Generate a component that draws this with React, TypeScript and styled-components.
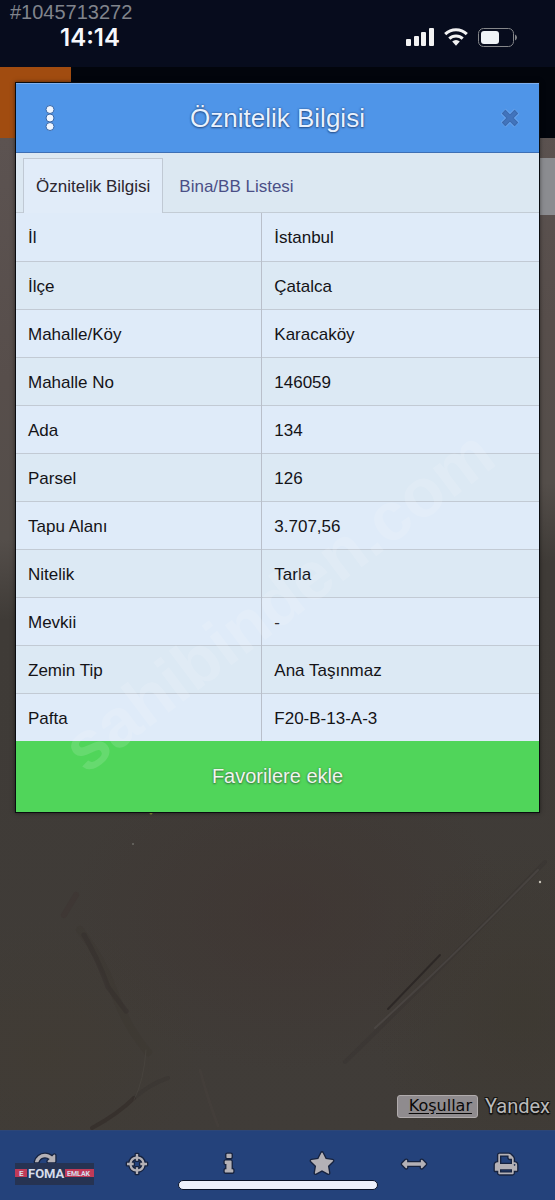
import React from "react";
import styled, { createGlobalStyle } from "styled-components";

const GlobalStyle = createGlobalStyle`
  *, *::before, *::after { box-sizing: border-box; }
  body {
    margin: 0;
    background: #3f3b36;
    font-family: "Liberation Sans", Arial, sans-serif;
  }
  button { font-family: inherit; border: 0; padding: 0; background: none; cursor: pointer; }
`;

/* ---------- Page frame ---------- */

const Screen = styled.div`
  position: relative;
  display: grid;
  grid-template-columns: minmax(0, 1fr);
  min-height: 100vh;
  overflow: hidden;
`;

const Backdrop = styled.div`
  grid-area: 1 / 1;
  display: flex;
  flex-direction: column;
`;

const DialogLayer = styled.div`
  grid-area: 1 / 1;
  align-self: start;
  z-index: 1;
  padding: 83px 16px 120px;
  pointer-events: none;
`;

/* ---------- Status bar ---------- */

const StatusBar = styled.header`
  display: flex;
  align-items: flex-start;
  justify-content: space-between;
  height: 67px;
  padding: 24px 38px 0 60px;
  background: #070c1d;
`;

const Clock = styled.time`
  color: #f6f8fc;
  font: 600 24px/28px Inter, "Liberation Sans", sans-serif;
`;

const StatusIcons = styled.div`
  display: flex;
  align-items: center;
  gap: 10px;
  height: 26px;
`;

const ListingNumber = styled.span`
  position: absolute;
  top: 0;
  left: 10px;
  color: #80848c;
  font-size: 20px;
  line-height: 24px;
`;

const AppBar = styled.div`
  display: flex;
  height: 71px;
  background: #02050c;
`;

const BrandTile = styled.div`
  width: 71px;
  background: #a14c10;
`;

/* ---------- Map ---------- */

const Map = styled.main`
  position: relative;
  flex: 1;
  display: flex;
  flex-direction: column;
  justify-content: space-between;
  align-items: flex-end;
  padding: 20px 0 12px;
  background:
    radial-gradient(ellipse 220px 160px at 52% 78%, rgba(64, 50, 47, 0.45), transparent),
    radial-gradient(ellipse 160px 130px at 8% 92%, rgba(66, 60, 50, 0.5), transparent),
    radial-gradient(ellipse 150px 170px at 94% 88%, rgba(60, 55, 45, 0.5), transparent),
    linear-gradient(174deg, #5c5351 0, #574e4b 240px, #544e4a 400px, #3f3b37 480px, #403c38 100%);
`;

const Terrain = styled.svg`
  position: absolute;
  left: 0;
  bottom: 0;
  width: 100%;
  height: 318px;
`;

const MapControl = styled.div`
  width: 15px;
  height: 57px;
  background: #8b8c90;
`;

const Attribution = styled.footer`
  position: relative;
  display: flex;
  align-items: center;
  gap: 7px;
  padding-right: 5px;
`;

const Terms = styled.a`
  display: block;
  width: 81px;
  height: 23px;
  padding-right: 5px;
  border: 1px solid #b0abac;
  border-radius: 3px;
  background: #8f8b8e;
  color: #0a0909;
  font-family: "DejaVu Sans", Verdana, sans-serif;
  font-size: 16px;
  line-height: 20px;
  text-align: right;
  text-underline-offset: 2px;
`;

const Provider = styled.span`
  color: #b9b9ba;
  font: 400 20px/24px Roboto, "Liberation Sans", sans-serif;
  text-shadow: 1px 1px 0 #161513, -1px -1px 0 #161513, 1px -1px 0 #161513, -1px 1px 0 #161513,
    0 2px 1px #161513;
`;

/* ---------- Bottom navigation ---------- */

const BottomNav = styled.nav`
  position: relative;
  display: grid;
  grid-template-columns: repeat(6, 1fr);
  height: 70px;
  padding-right: 2px;
  background: #24427b;
  border-top: 1px solid #2d4677;
`;

const NavButton = styled.button`
  display: flex;
  justify-content: center;
  align-items: flex-start;
  padding: 21px 2px 0 0;
  color: #b4b1b6;
`;

const NavIcon = styled.svg`
  width: 24px;
  height: 24px;
  overflow: visible;
  fill: currentColor;
  stroke: #17233f;
  stroke-width: 200px;
  stroke-linejoin: round;
  paint-order: stroke;
`;

const HomeIndicator = styled.div`
  position: absolute;
  left: 50%;
  bottom: 10px;
  width: 200px;
  height: 10px;
  transform: translateX(-50%);
  border: 1px solid #0c1428;
  border-radius: 5px;
  background: #eef1fb;
`;

const Sticker = styled.div`
  position: absolute;
  left: 15px;
  bottom: 15px;
  display: flex;
  align-items: center;
  width: 79px;
  height: 22px;
  background: linear-gradient(#263352 6px, #c03a58 6px, #c03a58 14px, #263352 14px);
  color: #d5dcea;
  font-family: Roboto, "Liberation Sans", sans-serif;
  font-weight: 700;
`;

const StickerMark = styled.span`
  width: 12px;
  padding-left: 4px;
  font-size: 8px;
  line-height: 20px;
`;

const StickerName = styled.span`
  width: 38px;
  padding-left: 1px;
  background: #263352;
  font-size: 13px;
  line-height: 20px;
`;

const StickerKind = styled.span`
  padding-left: 2px;
  font-size: 7px;
  line-height: 20px;
`;

/* ---------- Dialog ---------- */

const Dialog = styled.section`
  pointer-events: auto;
  background: #e0ebf9;
  box-shadow: 0 0 0 1px #0a0c10, 0 0 4px 1px rgba(0, 0, 0, 0.5);
`;

const DialogHeader = styled.header`
  display: grid;
  grid-template-columns: 68px 1fr 68px;
  height: 70px;
  border-top: 1px solid #7fb0ee;
  border-bottom: 1px solid #3d6fb5;
  background: #4f95e8;
`;

const DialogTitle = styled.h1`
  margin: 0;
  color: #e9f2ff;
  font-size: 26px;
  font-weight: 400;
  line-height: 68px;
  text-align: center;
  white-space: nowrap;
  text-shadow: 0 0 2px #23497f, 0 1px 2px #2a5390;
`;

const HeaderButton = styled.button<{ $end?: boolean }>`
  display: flex;
  align-items: center;
  justify-content: ${(p) => (p.$end ? "flex-end" : "center")};
  padding-right: ${(p) => (p.$end ? "18px" : "0")};
`;

const Tabs = styled.div`
  display: flex;
  align-items: flex-end;
  height: 60px;
  padding: 0 7px;
  border-bottom: 1px solid #c3ccd5;
  background: #dce8f2;
`;

const Tab = styled.button<{ $active?: boolean }>`
  height: 55px;
  margin-bottom: -1px;
  padding: 2px 12px 0;
  border: 1px solid ${(p) => (p.$active ? "#c0c9d4" : "transparent")};
  border-bottom: 0;
  background: ${(p) => (p.$active ? "#e1ecf9" : "transparent")};
  color: ${(p) => (p.$active ? "#2b2630" : "#4b4f86")};
  font-size: 17px;
  line-height: 52px;
  white-space: nowrap;

  & + & { margin-left: 3px; }
`;

const Attributes = styled.table`
  width: 100%;
  border-collapse: collapse;
  table-layout: fixed;
  color: #141317;
  font-size: 17px;
  line-height: 24px;
`;

const Row = styled.tr`
  height: 48px;
  background: #dfebf9;

  &:nth-child(even) { background: #dce9f4; }
  & + & { border-top: 1px solid #c2cad4; }
`;

const Label = styled.th`
  width: 47%;
  padding: 3px 12px 0;
  border-right: 1px solid #b9bfca;
  font-weight: 400;
  text-align: left;
`;

const Value = styled.td`
  padding: 3px 12px 0;
`;

const FavoriteButton = styled.button`
  display: block;
  width: 100%;
  height: 71px;
  background: #50d55a;
  color: #f0f5ee;
  font-size: 20px;
  text-shadow: 0 1px 2px #35763c, 0 0 2px #4b8a52;
`;

const Watermark = styled.div`
  position: absolute;
  z-index: 2;
  top: 600px;
  left: 50%;
  color: rgba(255, 255, 255, 0.13);
  font: 700 68px/1 "Liberation Sans", Arial, sans-serif;
  white-space: nowrap;
  transform: translate(-50%, -50%) rotate(-37deg);
  pointer-events: none;
`;

/* ---------- Data ---------- */

const attributes: [string, string][] = [
  ["İl", "İstanbul"],
  ["İlçe", "Çatalca"],
  ["Mahalle/Köy", "Karacaköy"],
  ["Mahalle No", "146059"],
  ["Ada", "134"],
  ["Parsel", "126"],
  ["Tapu Alanı", "3.707,56"],
  ["Nitelik", "Tarla"],
  ["Mevkii", "-"],
  ["Zemin Tip", "Ana Taşınmaz"],
  ["Pafta", "F20-B-13-A-3"],
];

const navItems = [
  {
    label: "Yenile",
    path: "M1639 1056q0 5-1 7-64 268-268 434.5t-478 166.5q-146 0-282.5-55t-243.5-157l-129 129q-19 19-45 19t-45-19-19-45v-448q0-26 19-45t45-19h448q26 0 45 19t19 45-19 45l-137 137q71 66 161 102t187 36q134 0 250-65t186-179q11-17 53-117 8-23 30-23h192q13 0 22.5 9.5t9.5 22.5zm25-800v448q0 26-19 45t-45 19h-448q-26 0-45-19t-19-45 19-45l138-138q-148-137-349-137-134 0-250 65t-186 179q-11 17-53 117-8 23-30 23h-199q-13 0-22.5-9.5t-9.5-22.5v-7q65-268 270-434.5t480-166.5q146 0 284 55.5t245 156.5l130-129q19-19 45-19t45 19 19 45z",
  },
  {
    label: "Konum",
    path: "M810 150h172v180a575 575 0 0 1 480 480h180v172h-180a575 575 0 0 1-480 480v180h-172v-180a575 575 0 0 1-480-480h-180v-172h180a575 575 0 0 1 480-480zM810 500a410 410 0 0 0-310 310h150v172h-150a410 410 0 0 0 310 310v-150h172v150a410 410 0 0 0 310-310h-150v-172h150a410 410 0 0 0-310-310v150h-172z",
  },
  {
    label: "Bilgi",
    path: "M1216 1344v128q0 26-19 45t-45 19h-512q-26 0-45-19t-19-45v-128q0-26 19-45t45-19h64v-384h-64q-26 0-45-19t-19-45v-128q0-26 19-45t45-19h384q26 0 45 19t19 45v576h64q26 0 45 19t19 45zm-128-1152v192q0 26-19 45t-45 19h-256q-26 0-45-19t-19-45v-192q0-26 19-45t45-19h256q26 0 45 19t19 45z",
  },
  {
    label: "Favoriler",
    path: "M1728 647q0 22-26 48l-363 354 86 500q1 7 1 20 0 21-10.5 35.5t-30.5 14.5q-19 0-40-12l-449-236-449 236q-22 12-40 12-21 0-31.5-14.5t-10.5-35.5q0-6 2-20l86-500-364-354q-25-27-25-48 0-37 56-46l502-73 225-455q19-41 49-41t49 41l225 455 502 73q56 9 56 46z",
  },
  {
    label: "Ölçüm",
    path: "M1792 896q0 26-19 45l-256 256q-19 19-45 19t-45-19-19-45v-128h-1024v128q0 26-19 45t-45 19-45-19l-256-256q-19-19-19-45t19-45l256-256q19-19 45-19t45 19 19 45v128h1024v-128q0-26 19-45t45-19 45 19l256 256q19 19 19 45z",
  },
  {
    label: "Yazdır",
    path: "M448 1536h896v-256h-896v256zm0-640h896v-384h-160q-40 0-68-28t-28-68v-160h-640v640zm1152 64q0-26-19-45t-45-19-45 19-19 45 19 45 45 19 45-19 19-45zm128 0v416q0 13-9.5 22.5t-22.5 9.5h-224v160q0 40-28 68t-68 28h-960q-40 0-68-28t-28-68v-160h-224q-13 0-22.5-9.5t-9.5-22.5v-416q0-79 56.5-135.5t135.5-56.5h64v-544q0-40 28-68t68-28h672q40 0 88 20t76 48l152 152q28 28 48 76t20 88v256h64q79 0 135.5 56.5t56.5 135.5z",
  },
];

/* ---------- Drawings ---------- */

const SignalIcon = () => (
  <svg width="28" height="18" viewBox="0 0 28 18" fill="#f2f2f2" aria-hidden="true">
    <rect x="0" y="11" width="5" height="7" rx="1" />
    <rect x="8" y="8" width="5" height="10" rx="1" />
    <rect x="15" y="4" width="5" height="14" rx="1" />
    <rect x="23" y="0" width="5" height="18" rx="1" />
  </svg>
);

const WifiIcon = () => (
  <svg width="24" height="18" viewBox="0 0 24 18" aria-hidden="true">
    <g fill="none" stroke="#f2f2f2" strokeWidth="3">
      <path d="M1.2 6.2a15.5 15.5 0 0 1 21.6 0" />
      <path d="M5.3 10.6a9.6 9.6 0 0 1 13.4 0" />
    </g>
    <path d="M8.2 13.6a5.5 5.5 0 0 1 7.6 0L12 17.8z" fill="#f2f2f2" />
  </svg>
);

const BatteryIcon = () => (
  <svg width="39" height="19" viewBox="0 0 39 19" aria-hidden="true">
    <rect x="0.5" y="0.5" width="35" height="18" rx="5" fill="none" stroke="#85878a" />
    <rect x="3" y="3" width="18" height="13" rx="3" fill="#eef2f6" />
    <path d="M37 6.5q2 .8 2 3t-2 3z" fill="#85878a" />
  </svg>
);

const DotsIcon = () => (
  <svg width="12" height="28" viewBox="0 0 12 28" aria-hidden="true">
    <g fill="#f0f6ff" stroke="#3867a8" strokeWidth="1">
      <circle cx="6" cy="5.5" r="4" />
      <circle cx="6" cy="14" r="4" />
      <circle cx="6" cy="22.5" r="4" />
    </g>
  </svg>
);

const CloseIcon = () => (
  <svg width="22" height="22" viewBox="0 0 22 22" aria-hidden="true">
    <path d="M4.2 4.2l13.6 13.6M17.8 4.2L4.2 17.8" stroke="#6fa9f0" strokeWidth="7" />
    <path d="M4.5 4.5l13 13M17.5 4.5l-13 13" stroke="#3b6cb2" strokeWidth="5.4" />
    <path d="M5.4 5.4l11.2 11.2M16.6 5.4L5.4 16.6" stroke="#4274bc" strokeWidth="3.4" />
  </svg>
);

export default function App() {
  return (
    <>
      <GlobalStyle />
      <Screen>
        <Backdrop>
          <StatusBar>
            <Clock>14:14</Clock>
            <StatusIcons>
              <SignalIcon />
              <WifiIcon />
              <BatteryIcon />
            </StatusIcons>
          </StatusBar>
          <AppBar>
            <BrandTile />
          </AppBar>
          <Map>
            <Terrain viewBox="0 812 555 318" preserveAspectRatio="none" aria-hidden="true">
              <g fill="none" strokeLinecap="round">
                <path d="M80 930q22 28 34 62t34 60" stroke="#332d2b" strokeWidth="8" opacity="0.15" />
                <path d="M84 935q14 24 24 52l18 24" stroke="#2f2827" strokeWidth="5" opacity="0.3" />
                <path d="M545 862Q450 960 345 1062" stroke="#302c2a" strokeWidth="4" opacity="0.25" />
                <path d="M538 870Q450 960 375 1028" stroke="#575250" strokeWidth="2" opacity="0.45" />
                <path d="M440 955l-52 54" stroke="#211d1c" strokeWidth="2" opacity="0.6" />
                <path d="M92 1128q26-14 42-30" stroke="#2d2422" strokeWidth="4" opacity="0.45" />
                <path d="M134 1098q16-14 34-20" stroke="#2d2826" strokeWidth="4" opacity="0.2" />
                <path d="M76 895l-12 20" stroke="#3a2c2a" strokeWidth="6" opacity="0.25" />
                <path d="M146 1050q-2 30-12 50" stroke="#4d4943" strokeWidth="1" opacity="0.5" />
                <path d="M200 1070q8 30 18 56" stroke="#4a4540" strokeWidth="3" opacity="0.25" />
              </g>
              <circle cx="540" cy="882" r="1.2" fill="#c9c5bb" />
              <circle cx="151" cy="813" r="1.5" fill="#8a9a38" />
              <circle cx="133" cy="844" r="1" fill="#6d6b66" />
            </Terrain>
            <MapControl />
            <Attribution>
              <Terms href="#kosullar">Koşullar</Terms>
              <Provider>Yandex</Provider>
            </Attribution>
          </Map>
          <BottomNav>
            {navItems.map((item) => (
              <NavButton key={item.label} type="button" aria-label={item.label}>
                <NavIcon viewBox="0 0 1792 1792" aria-hidden="true">
                  <path d={item.path} />
                </NavIcon>
              </NavButton>
            ))}
            <HomeIndicator />
            <Sticker>
              <StickerMark>E</StickerMark>
              <StickerName>FOMA</StickerName>
              <StickerKind>EMLAK</StickerKind>
            </Sticker>
          </BottomNav>
        </Backdrop>

        <DialogLayer>
          <Dialog role="dialog" aria-labelledby="dialog-title">
            <DialogHeader>
              <HeaderButton type="button" aria-label="Menü">
                <DotsIcon />
              </HeaderButton>
              <DialogTitle id="dialog-title">Öznitelik Bilgisi</DialogTitle>
              <HeaderButton type="button" aria-label="Kapat" $end>
                <CloseIcon />
              </HeaderButton>
            </DialogHeader>
            <Tabs role="tablist">
              <Tab type="button" role="tab" aria-selected="true" $active>
                Öznitelik Bilgisi
              </Tab>
              <Tab type="button" role="tab" aria-selected="false">
                Bina/BB Listesi
              </Tab>
            </Tabs>
            <Attributes>
              <tbody>
                {attributes.map(([label, value]) => (
                  <Row key={label}>
                    <Label scope="row">{label}</Label>
                    <Value>{value}</Value>
                  </Row>
                ))}
              </tbody>
            </Attributes>
            <FavoriteButton type="button">Favorilere ekle</FavoriteButton>
          </Dialog>
        </DialogLayer>

        <ListingNumber>#1045713272</ListingNumber>
        <Watermark aria-hidden="true">sahibinden.com</Watermark>
      </Screen>
    </>
  );
}
